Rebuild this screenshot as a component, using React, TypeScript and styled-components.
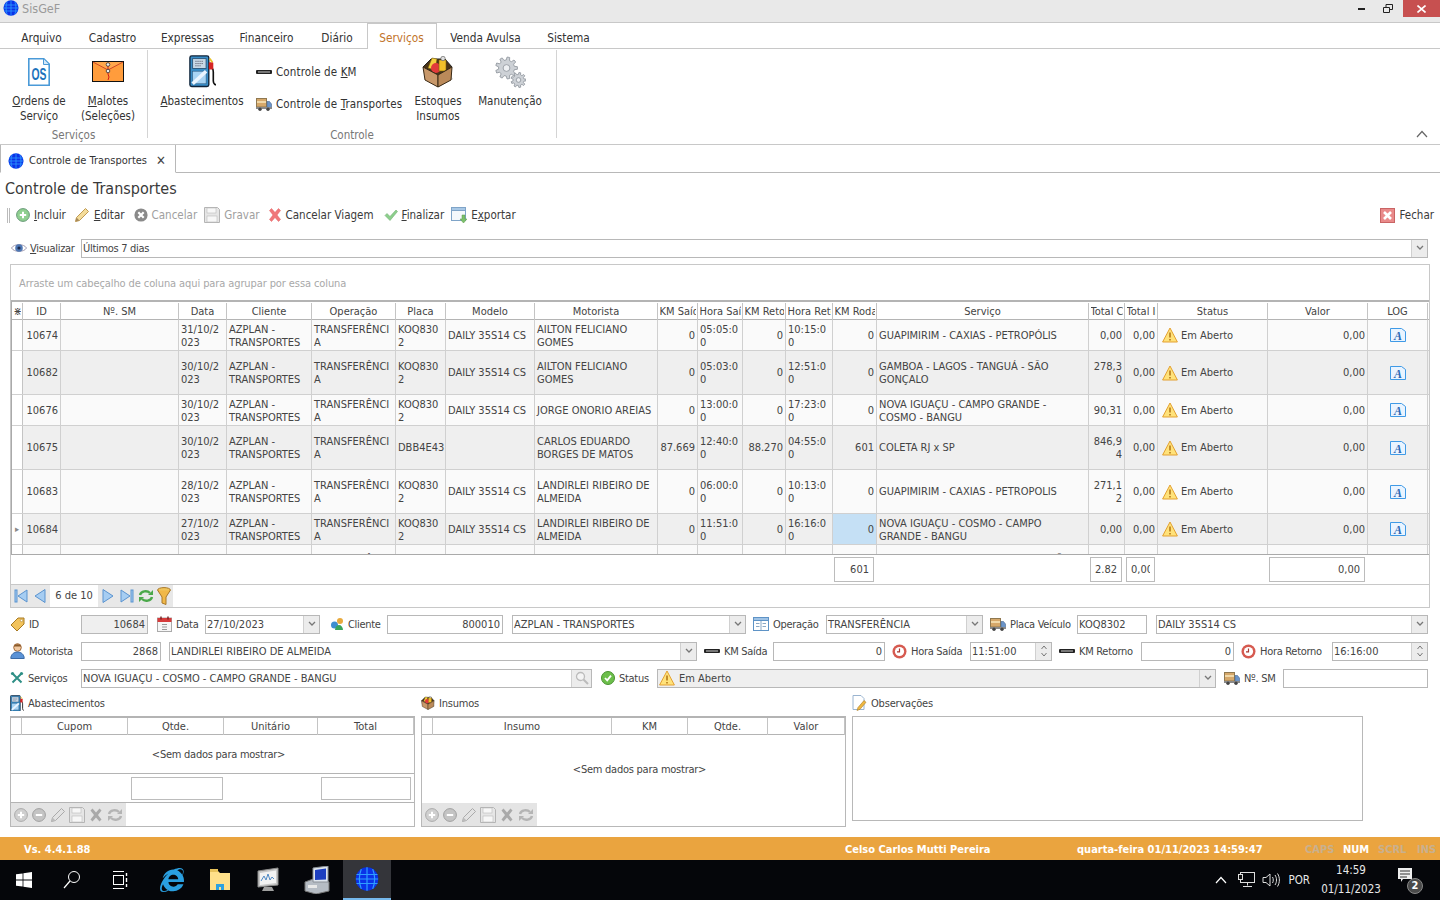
import React from 'react'
import styled, { createGlobalStyle } from 'styled-components'
import { FaInternetExplorer } from 'react-icons/fa'

const GlobalStyle = createGlobalStyle`
  html, body {
    margin: 0;
    padding: 0;
    height: 100%;
    overflow: hidden;
    background: #fff;
  }
  * { box-sizing: border-box; }
  body {
    font-family: 'DejaVu Sans Condensed', 'DejaVu Sans', 'Liberation Sans', sans-serif;
    font-stretch: condensed;
    font-size: 11px;
    line-height: 13px;
    color: #444;
  }
  svg { display: block; flex: none; }
`

/* ---------- icons ---------- */

const gearPath = (cx: number, cy: number, r1: number, r2: number, teeth: number) => {
  const pts: string[] = []
  const step = (Math.PI * 2) / teeth
  for (let i = 0; i < teeth; i++) {
    const a = i * step
    const corners: [number, number][] = [[-0.3, r2], [-0.17, r1], [0.17, r1], [0.3, r2]]
    corners.forEach(([o, r]) => {
      const t = a + o * step
      pts.push(`${(cx + r * Math.cos(t)).toFixed(1)} ${(cy + r * Math.sin(t)).toFixed(1)}`)
    })
  }
  return `M${pts.join('L')}z`
}

const Globe = ({ s = 16 }: { s?: number }) => (
  <svg width={s} height={s} viewBox="0 0 16 16">
    <ellipse cx="8" cy="8" rx="7.5" ry="7.8" fill="#0a32e8" />
    <path d="M1 5h14M.6 8h14.800M1 11h14M8 .2v15.600M4.200 1.400c-1.600 4-1.600 9.200 0 13.200M11.800 1.400c1.600 4 1.600 9.200 0 13.200" fill="none" stroke="#2f9dff" strokeWidth=".8" />
  </svg>
)

const KmBar = ({ s = 16 }: { s?: number }) => (
  <svg width={s} height={s} viewBox="0 0 16 16">
    <rect x="0" y="6" width="16" height="4" rx="1" fill="#222" />
    <rect x="2" y="7" width="12" height="2" fill="#777" />
  </svg>
)

const Truck = ({ s = 16 }: { s?: number }) => (
  <svg width={s} height={s} viewBox="0 0 16 16">
    <rect x=".5" y="2.500" width="10" height="8.500" fill="#d6a86a" stroke="#8f7850" />
    <rect x="1" y="5" width="9" height="2" fill="#f0d8a8" />
    <path d="M11 5.500h2.500l2 2.500v4H11z" fill="#6b94c8" stroke="#47678e" strokeWidth=".6" />
    <rect x="0" y="11" width="16" height="2" fill="#8a8a8a" />
    <circle cx="4" cy="13.300" r="1.700" fill="#444" />
    <circle cx="12" cy="13.300" r="1.700" fill="#444" />
  </svg>
)

const BoxIcon = ({ s = 16 }: { s?: number }) => (
  <svg width={s} height={s} viewBox="0 0 32 32">
    <path d="M17 31l14-8-2-3-12 8z" fill="#999" opacity=".5" />
    <path d="M1 11L9 3h14l7 8-14 8z" fill="#4a3418" stroke="#222" />
    <path d="M6 12L10 2l5 1-2 11z" fill="#f4d040" stroke="#7a6010" strokeWidth=".6" />
    <circle cx="14" cy="12" r="5" fill="#e23a3a" />
    <rect x="17" y="4" width="7" height="11" fill="#f2c02a" stroke="#7a6010" strokeWidth=".6" />
    <circle cx="21" cy="2.500" r="2.200" fill="#ddd" stroke="#555" strokeWidth=".6" />
    <path d="M1 11l15 8v12L3 24z" fill="#c8986a" stroke="#3a2a15" />
    <path d="M30 11l-14 8v12l13-7z" fill="#bb8a5a" stroke="#3a2a15" />
  </svg>
)

const PumpIcon = ({ s = 16 }: { s?: number }) => (
  <svg width={s} height={s * 1.2} viewBox="0 0 30 36">
    <rect x="1" y="1" width="21" height="34" rx="2" fill="#3a8ec8" stroke="#0e2238" strokeWidth="1.500" />
    <rect x="4" y="4" width="15" height="11" fill="#c8d8e6" stroke="#2a5478" />
    <path d="M7 7h9M7 9.500h9M7 12h6" stroke="#556" strokeWidth=".9" strokeDasharray="1.500 .8" />
    <rect x="4" y="18" width="15" height="14" fill="#a8d4f4" stroke="#2a5478" strokeWidth=".6" />
    <path d="M4 32l15-14" stroke="#eaf5ff" strokeWidth="4" />
    <path d="M22 13c4 0 5 2 5 6v10c0 4 3 4 3 4" fill="none" stroke="#111" strokeWidth="1.800" />
    <rect x="22" y="8" width="5" height="8" rx="1" fill="#d52424" />
    <path d="M23 4l3 4" stroke="#e8c22a" strokeWidth="2" />
  </svg>
)

const Gears = () => (
  <svg width="32" height="32" viewBox="0 0 32 32">
    <g fill="#cdd1d6" stroke="#8c9299" strokeWidth=".8">
      <path d={gearPath(12.5, 12, 11, 8, 9)} />
      <circle cx="12.500" cy="12" r="3.400" fill="#eef0f3" />
      <path d={gearPath(24.5, 24, 7.5, 5.5, 9)} />
      <circle cx="24.500" cy="24" r="2.300" fill="#eef0f3" />
    </g>
  </svg>
)

const PlusDisc = ({ off }: { off?: boolean }) => (
  <svg width="14" height="14" viewBox="0 0 14 14">
    <circle cx="7" cy="7" r="6.400" fill={off ? '#cfcfcf' : '#8fcf8f'} stroke={off ? '#aaa' : '#6a9a7a'} />
    <path d="M7 3.800v6.400M3.800 7h6.400" stroke="#fff" strokeWidth="2" />
  </svg>
)

const MinusDisc = () => (
  <svg width="14" height="14" viewBox="0 0 14 14">
    <circle cx="7" cy="7" r="6.400" fill="#c4c4c4" stroke="#a0a0a0" />
    <path d="M3.800 7h6.400" stroke="#fff" strokeWidth="2" />
  </svg>
)

const Pencil = ({ off }: { off?: boolean }) => (
  <svg width="16" height="16" viewBox="0 0 16 16">
    <path d="M1.500 14.500l1-4L11.500 1.500l3 3-9 9z" fill={off ? '#e2e2e2' : '#f4dc9a'} stroke={off ? '#aaa' : '#c09a52'} />
    <path d="M1.500 14.500l1-4 3 3z" fill={off ? '#bbb' : '#a88a5a'} />
  </svg>
)

const CancelDisc = () => (
  <svg width="14" height="14" viewBox="0 0 14 14">
    <circle cx="7" cy="7" r="6.600" fill="#8a8a8a" />
    <path d="M4.300 4.300l5.400 5.400M9.700 4.300l-5.400 5.400" stroke="#fff" strokeWidth="2.200" />
  </svg>
)

const Floppy = () => (
  <svg width="16" height="16" viewBox="0 0 16 16">
    <path d="M.5.5h13l2 2v13H.5z" fill="#e6e6e6" stroke="#b4b4b4" />
    <rect x="3" y="1" width="9" height="5" fill="#f7f7f7" stroke="#bbb" strokeWidth=".6" />
    <rect x="3" y="9" width="10" height="6" fill="#f7f7f7" stroke="#bbb" strokeWidth=".6" />
  </svg>
)

const RedX = () => (
  <svg width="14" height="14" viewBox="0 0 14 14">
    <path d="M1.500 2.500l2-2L7 4.500 10.500.5l2 2L9 7l3.500 4.500-2 2L7 9.500l-3.500 4-2-2L5 7z" fill="#f0787a" stroke="#e35a5c" strokeWidth=".5" />
  </svg>
)

const CloseBox = () => (
  <svg width="15" height="15" viewBox="0 0 15 15">
    <rect x=".5" y=".5" width="14" height="14" fill="#e98a8a" stroke="#c96464" />
    <path d="M4 4l7 7M11 4l-7 7" stroke="#fff" strokeWidth="2.600" />
  </svg>
)

const GrayX = () => (
  <svg width="14" height="14" viewBox="0 0 14 14">
    <path d="M1.500 2.500l2-2L7 4.500 10.500.5l2 2L9 7l3.500 4.500-2 2L7 9.500l-3.500 4-2-2L5 7z" fill="#a9a9a9" />
  </svg>
)

const Check = () => (
  <svg width="14" height="14" viewBox="0 0 14 14">
    <path d="M1 7.500l2-2 3 3L12 2l1.500 1.500L6 12.500z" fill="#8ccf8c" stroke="#73b073" strokeWidth=".6" />
  </svg>
)

const ExportIcon = () => (
  <svg width="16" height="16" viewBox="0 0 16 16">
    <rect x=".5" y=".5" width="14" height="13" fill="#f4f8fc" stroke="#7fa4c8" />
    <rect x=".5" y=".5" width="14" height="3" fill="#a8c8e6" stroke="#7fa4c8" />
    <path d="M11 8h3v4h2l-3.500 4L9 12h2z" fill="#7cc06a" stroke="#5a9a4c" strokeWidth=".5" />
  </svg>
)

const EyeIcon = () => (
  <svg width="16" height="12" viewBox="0 0 16 12">
    <path d="M.5 6C3 1.500 13 1.500 15.500 6 13 10.500 3 10.500 .5 6z" fill="#fff" stroke="#a09ab0" />
    <circle cx="8" cy="6" r="3.800" fill="#4f78b4" />
    <circle cx="8" cy="6" r="1.600" fill="#1b2a4c" />
  </svg>
)

const Warn = () => (
  <svg width="16" height="16" viewBox="0 0 16 16">
    <path d="M8 1l7.400 14H.6z" fill="#ffe27a" stroke="#e3a030" strokeLinejoin="round" />
    <path d="M8 5.500v5M8 12v1.600" stroke="#b5791a" strokeWidth="1.600" />
  </svg>
)

const LogDoc = () => (
  <svg width="16" height="16" viewBox="0 0 16 16">
    <path d="M.5 1.500h11l4 3v10H.5z" fill="#eaf4ff" stroke="#3f9ae6" />
    <text x="8" y="13" textAnchor="middle" fontSize="12" fontWeight="700" fontStyle="italic" fill="#2a67b4" fontFamily="Liberation Serif, serif">A</text>
  </svg>
)

const NavArrow = ({ dir, edge }: { dir: 'l' | 'r'; edge?: boolean }) => (
  <svg width="16" height="16" viewBox="0 0 16 16">
    <g transform={dir === 'l' ? 'translate(16 0) scale(-1 1)' : undefined} fill="#a6cdf2" stroke="#5a93cf">
      <path d={edge ? 'M2 2l9 6-9 6z' : 'M3 1.500L13 8 3 14.500z'} />
      {edge && <rect x="12" y="2" width="2" height="12" />}
    </g>
  </svg>
)

const Recycle = ({ off }: { off?: boolean }) => (
  <svg width="16" height="16" viewBox="0 0 16 16">
    <g fill="none" stroke={off ? '#b4b4b4' : '#4aa84a'} strokeWidth="2.400">
      <path d="M2 7c1-4 7-5 10-2" />
      <path d="M14 9c-1 4-7 5-10 2" />
    </g>
    <path d="M15 2v5h-5zM1 14V9h5z" fill={off ? '#b4b4b4' : '#4aa84a'} />
  </svg>
)

const Funnel = () => (
  <svg width="14" height="18" viewBox="0 0 14 18">
    <ellipse cx="7" cy="3" rx="6.400" ry="2.400" fill="#f0c45a" stroke="#a8782a" />
    <path d="M.8 3.500L5 10v6l4 1.500V10l4.200-6.500" fill="#f0b848" stroke="#a8782a" />
  </svg>
)

const Tag = () => (
  <svg width="15" height="15" viewBox="0 0 15 15">
    <path d="M1 8L8 1h6v6l-7 7z" fill="#f2c35c" stroke="#a87a22" />
    <circle cx="11.500" cy="3.500" r="1.200" fill="#fff" stroke="#a87a22" strokeWidth=".6" />
  </svg>
)

const CalendarIcon = () => (
  <svg width="15" height="16" viewBox="0 0 15 16">
    <rect x=".5" y="2" width="14" height="13.500" fill="#f6f6f6" stroke="#aaa" />
    <rect x=".5" y="2" width="14" height="4" fill="#d63b3b" />
    <path d="M4 .5v3M11 .5v3" stroke="#7a2020" strokeWidth="1.400" />
    <path d="M5 8.500h5M5 11h5M5 13.500h5" stroke="#999" />
  </svg>
)

const ContactIcon = () => (
  <svg width="14" height="14" viewBox="0 0 14 14">
    <circle cx="4.500" cy="8" r="3.500" fill="#3e8ed0" />
    <circle cx="10" cy="4" r="3" fill="#e8a93c" />
    <path d="M5 13c0-3 2-5 4-5s4 2 4 5z" fill="#3aa55c" />
  </svg>
)

const TableIcon = () => (
  <svg width="16" height="14" viewBox="0 0 16 14">
    <rect x=".5" y=".5" width="15" height="13" fill="#fff" stroke="#5e93c6" />
    <rect x=".5" y=".5" width="15" height="3" fill="#9fc3e6" stroke="#5e93c6" />
    <path d="M8 4v9M3 6.500h3.500M3 9.500h3.500M9.500 6.500H13M9.500 9.500H13" stroke="#8aa8c4" />
  </svg>
)

const ClockIcon = () => (
  <svg width="15" height="15" viewBox="0 0 15 15">
    <circle cx="7.500" cy="7.500" r="7" fill="#d65a50" />
    <circle cx="7.500" cy="7.500" r="4.600" fill="#fff" />
    <path d="M7.500 4.500v3.300H5" fill="none" stroke="#a83830" strokeWidth="1.200" />
  </svg>
)

const PersonIcon = () => (
  <svg width="15" height="16" viewBox="0 0 15 16">
    <circle cx="7.500" cy="4.500" r="3.800" fill="#f0c8a0" stroke="#a46a3a" />
    <path d="M3.800 3.500c1-3 6.400-3 7.400 0z" fill="#8a5a2a" />
    <path d="M.8 15.500c0-4 3-6.500 6.700-6.500s6.700 2.500 6.700 6.500z" fill="#5a92d6" stroke="#3a6aa6" />
  </svg>
)

const ToolsIcon = () => (
  <svg width="14" height="14" viewBox="0 0 14 14">
    <path d="M2.500 2.500l9 9M11.500 2.500l-9 9" stroke="#2f8f86" strokeWidth="2" />
    <circle cx="2.500" cy="2.500" r="1.600" fill="#2f8f86" />
    <circle cx="11.500" cy="2.500" r="1.600" fill="#2f8f86" />
  </svg>
)

const GreenOk = () => (
  <svg width="14" height="14" viewBox="0 0 14 14">
    <circle cx="7" cy="7" r="6.500" fill="#6cbe4a" stroke="#4a9232" />
    <path d="M4 7l2.200 2.400L10 4.600" fill="none" stroke="#fff" strokeWidth="1.800" />
  </svg>
)

const Magnifier = () => (
  <svg width="14" height="14" viewBox="0 0 14 14">
    <circle cx="5.500" cy="5.500" r="4" fill="#f4f4f4" stroke="#bbb" strokeWidth="1.300" />
    <path d="M8.500 8.500l4.500 4.500" stroke="#bbb" strokeWidth="2" />
  </svg>
)

const NoteIcon = () => (
  <svg width="15" height="16" viewBox="0 0 15 16">
    <path d="M1 .5h8l3 3v11H1z" fill="#fff" stroke="#9ab4d0" />
    <path d="M5 15.500l1-3 6-7 2 1.800-6 7z" fill="#f0b840" stroke="#a87a22" strokeWidth=".6" />
  </svg>
)

const Chevron = () => (
  <svg width="8" height="6" viewBox="0 0 8 6">
    <path d="M1 1l3 3 3-3" fill="none" stroke="#777" strokeWidth="1.300" />
  </svg>
)

const SpinArrows = () => (
  <svg width="8" height="14" viewBox="0 0 8 14">
    <path d="M1.500 5l2.500-3 2.500 3M1.500 9l2.500 3 2.500-3" fill="none" stroke="#777" />
  </svg>
)

const OsIcon = () => (
  <svg width="22" height="28" viewBox="0 0 22 28">
    <path d="M.8.8h15l5.400 5.400v21H.8z" fill="#fff" stroke="#4a9ad8" strokeWidth="1.600" />
    <path d="M15.500 1v5.500H21" fill="#d4e8f8" stroke="#4a9ad8" />
    <text x="11" y="22" textAnchor="middle" fontSize="17" fontWeight="700" fill="#1c72bc" fontFamily="Liberation Sans, sans-serif" textLength="15" lengthAdjust="spacingAndGlyphs">OS</text>
  </svg>
)

const EnvelopeIcon = () => (
  <svg width="32" height="21" viewBox="0 0 32 21">
    <rect x=".5" y=".5" width="31" height="20" fill="#ff9c3c" stroke="#111" />
    <path d="M1 1l15 8L31 1" fill="#ffa84c" stroke="#c03020" strokeWidth=".8" />
    <path d="M16 4l0 9 1 3-1 3" fill="none" stroke="#d01818" />
    <circle cx="16" cy="3.500" r="1.800" fill="#eee" stroke="#333" strokeWidth=".8" />
    <circle cx="16" cy="10" r="1.800" fill="#eee" stroke="#333" strokeWidth=".8" />
  </svg>
)

const WinLogo = () => (
  <svg width="16" height="16" viewBox="0 0 16 16">
    <path d="M0 2.300L6.600 1.400v6.100H0zM7.400 1.300L16 0v7.500H7.400zM0 8.400h6.600v6.200L0 13.700zM7.400 8.400H16V16l-8.600-1.300z" fill="#fff" />
  </svg>
)

const SearchGlyph = () => (
  <svg width="18" height="20" viewBox="0 0 18 20">
    <circle cx="11" cy="7" r="5.500" fill="none" stroke="#fff" />
    <path d="M7 11l-6 7" stroke="#fff" strokeWidth="1.200" />
  </svg>
)

const TaskView = () => (
  <svg width="18" height="18" viewBox="0 0 18 18">
    <path d="M2 .5h11M2 17.500h11" stroke="#fff" />
    <rect x="2.500" y="4.500" width="10" height="9" fill="none" stroke="#fff" />
    <path d="M15.500 2v3M15.500 7v4M15.500 13v3" stroke="#fff" strokeWidth="1.400" />
  </svg>
)

const FolderIcon = () => (
  <svg width="22" height="24" viewBox="0 0 22 24">
    <path d="M1 3h8l2 2h10v17H1z" fill="#ffe08a" />
    <rect x="1" y="1" width="8" height="3" fill="#e8c25a" />
    <path d="M7 22v-6h8v6h-3v-3h-2v3z" fill="#2ea2e0" />
  </svg>
)

const MonitorApp = () => (
  <svg width="24" height="26" viewBox="0 0 24 26">
    <path d="M2 4l20-3v17L2 20z" fill="#c8c8c8" stroke="#8a8a8a" />
    <path d="M4 6l16-2.400V16L4 18z" fill="#f2f2f2" />
    <path d="M5 14l3-5 2 4 2-6 2 6 2-3 2 2" fill="none" stroke="#3f7fc0" strokeWidth=".9" />
    <path d="M8 20h8l2 4H6z" fill="#a0a0a0" />
  </svg>
)

const ServerApp = () => (
  <svg width="26" height="28" viewBox="0 0 26 28">
    <path d="M1 16l11-4 13 4v9l-13 3-11-3z" fill="#b6bcc4" stroke="#777" />
    <path d="M9 2l15-2v16L9 16z" fill="#dfe6ee" stroke="#8a8f96" />
    <path d="M11 4l11-1.500v11L11 14z" fill="#1d3fc0" />
    <rect x="4" y="19" width="9" height="3" fill="#e8e8e8" />
  </svg>
)

const NetTray = () => (
  <svg width="17" height="16" viewBox="0 0 17 16">
    <rect x="2.500" y=".5" width="14" height="10" fill="none" stroke="#ddd" />
    <rect x=".5" y="2.500" width="4" height="5" fill="#111" stroke="#ddd" />
    <path d="M9.500 10.500v3M5 14.500h9" stroke="#ddd" />
  </svg>
)

const SoundTray = () => (
  <svg width="18" height="16" viewBox="0 0 18 16">
    <path d="M1 5.500h3l4-3.500v12l-4-3.500H1z" fill="none" stroke="#ddd" />
    <path d="M10.500 5c1 1.500 1 4.500 0 6M13 3c2 3 2 7 0 10M15.500 1.500c2.500 4 2.500 9 0 13" fill="none" stroke="#ddd" />
  </svg>
)

const UpCaret = ({ c = '#fff' }: { c?: string }) => (
  <svg width="12" height="8" viewBox="0 0 12 8">
    <path d="M1 7l5-5.500L11 7" fill="none" stroke={c} strokeWidth="1.200" />
  </svg>
)

/* ---------- window chrome ---------- */

const Page = styled.div`
  width: 1440px;
  height: 900px;
  display: flex;
  flex-direction: column;
  overflow: hidden;
`

const TitleBar = styled.div`
  height: 23px;
  flex: none;
  display: flex;
  align-items: flex-start;
  background: #e9e9e9;
  border-bottom: 1px solid #c8c8c8;
  padding-left: 3px;
`

const AppName = styled.span`
  margin: 1px 0 0 3px;
  font-size: 12.5px;
  line-height: 15px;
  color: #9a9a9a;
`

const WinButtons = styled.div`
  margin-left: auto;
  display: flex;
  align-items: flex-start;
`

const WinBtn = styled.div<{ $w: number; $close?: boolean }>`
  width: ${p => p.$w}px;
  height: 17px;
  display: flex;
  align-items: center;
  justify-content: center;
  background: ${p => (p.$close ? '#c75050' : 'transparent')};
`

const MenuBar = styled.div`
  height: 26px;
  flex: none;
  display: flex;
  padding-left: 7.5px;
  border-bottom: 1px solid #c8c8c8;
`

const MenuTab = styled.div<{ $w: number; $on?: boolean }>`
  width: ${p => p.$w}px;
  height: 26px;
  padding-top: 8px;
  text-align: center;
  font-size: 11.75px;
  line-height: 14px;
  white-space: nowrap;
  color: ${p => (p.$on ? '#c2742a' : '#333')};
  ${p => p.$on && 'background:#fff;border:1px solid #c8c8c8;border-bottom:0;padding-top:7px;'}
`

const Ribbon = styled.div`
  height: 96px;
  flex: none;
  display: flex;
  position: relative;
  border-bottom: 1px solid #c8c8c8;
`

const RibbonGroup = styled.div<{ $w: number }>`
  width: ${p => p.$w}px;
  height: 88px;
  margin-top: 1px;
  display: flex;
  flex-direction: column;
  border-right: 1px solid #d4d4d4;
`

const RibbonItems = styled.div`
  flex: 1;
  min-height: 0;
  display: flex;
`

const RibbonCaption = styled.div`
  height: 14px;
  padding-top: 5px;
  text-align: center;
  font-size: 11.5px;
  color: #777;
`

const BigItem = styled.div<{ $w: number }>`
  width: ${p => p.$w}px;
  display: flex;
  flex-direction: column;
  align-items: center;
  font-size: 11.5px;
  line-height: 15px;
  color: #333;
  text-align: center;
  white-space: pre;
`

const BigIcon = styled.div`
  height: 43px;
  margin-bottom: 1px;
  display: flex;
  align-items: center;
  justify-content: center;
`

const SmallStack = styled.div`
  width: 150px;
  padding-top: 14px;
  display: flex;
  flex-direction: column;
  gap: 16px;
`

const SmallItem = styled.div`
  height: 16px;
  display: flex;
  align-items: center;
  gap: 4px;
  font-size: 11.5px;
  letter-spacing: 0.12px;
  color: #333;
  white-space: nowrap;
`

const Collapse = styled.div`
  position: absolute;
  right: 12px;
  bottom: 6px;
`

const U = styled.span`
  text-decoration: underline;
  text-underline-offset: 1px;
`

const DocTabs = styled.div`
  height: 28px;
  flex: none;
  display: flex;
  border-bottom: 1px solid #b8b8b8;
`

const DocTab = styled.div`
  width: 176px;
  height: 28px;
  display: flex;
  align-items: center;
  padding: 4px 0 0 7px;
  gap: 5px;
  border-right: 1px solid #b8b8b8;
  border-bottom: 1px solid #fff;
  border-left: 1px solid #b8b8b8;
  color: #333;
  white-space: nowrap;
`

const TabClose = styled.span`
  margin-left: 4px;
  font-size: 13px;
  font-weight: 700;
  color: #444;
`

const Body = styled.div`
  flex: 1;
  display: flex;
  flex-direction: column;
  min-height: 0;
`

const Heading = styled.h1`
  margin: 0;
  padding: 6px 0 0 5px;
  height: 28px;
  font-size: 16px;
  line-height: 20px;
  font-weight: 400;
  color: #3a3a3a;
`

const ActionBar = styled.div`
  height: 26px;
  margin-top: 1px;
  padding-left: 7px;
  display: flex;
  align-items: center;
`

const Grip = styled.div`
  width: 3px;
  height: 15px;
  margin-right: 6px;
  border-left: 1px solid #bbb;
  border-right: 1px solid #bbb;
`

const Action = styled.div<{ $off?: boolean; $push?: boolean; $mr?: number }>`
  display: flex;
  align-items: center;
  gap: 4px;
  margin-right: ${p => p.$mr ?? 7}px;
  font-size: 11.5px;
  color: ${p => (p.$off ? '#a0a0a0' : '#3a3a3a')};
  white-space: nowrap;
  ${p => p.$push && 'margin-left:auto;margin-right:6px;'}
`

const ViewRow = styled.div`
  height: 20px;
  margin: 10px 11px 0 11px;
  display: flex;
  align-items: center;
  letter-spacing: -0.3px;
`

const ViewLabel = styled.div`
  width: 70px;
  display: flex;
  align-items: center;
  gap: 3px;
`

/* ---------- grid ---------- */

const COLS = '11px 38px 118px 48px 85px 84px 50px 89px 123px 40px 45px 43px 47px 44px 212px 36px 33px 110px 100px 60px'

const Panel = styled.div`
  margin: 6px 10px 0 10px;
  height: 344px;
  flex: none;
  border: 1px solid #c8c8c8;
  display: flex;
  flex-direction: column;
`

const DragHint = styled.div`
  height: 35px;
  padding: 12px 0 0 8px;
  color: #a8a8a8;
  letter-spacing: -0.1px;
`

const GridFrame = styled.div`
  height: 255px;
  border-top: 2px solid #b4b4b4;
  border-bottom: 1px solid #aaa;
  border-left: 1px solid #aaa;
  overflow: hidden;
`

const HeadRow = styled.div`
  display: grid;
  grid-template-columns: ${COLS};
  height: 18px;
  padding-top: 1px;
  border-bottom: 1px solid #b4b4b4;
`

const HeadCell = styled.div`
  border-right: 1px solid #c4c4c4;
  padding: 0 1.5px;
  color: #444;
`

const HeadText = styled.span`
  display: block;
  text-align: center;
  line-height: 17px;
  white-space: nowrap;
  overflow: hidden;
`

const DataRow = styled.div<{ $h: number; $even?: boolean }>`
  display: grid;
  grid-template-columns: ${COLS};
  height: ${p => p.$h}px;
  background: ${p => (p.$even ? '#efefef' : '#fafafa')};
  border-bottom: 1px solid #d0d0d0;
`

const Cell = styled.div<{ $r?: boolean; $sel?: boolean; $top?: boolean; $low?: boolean }>`
  display: flex;
  align-items: ${p => (p.$top ? 'flex-start' : 'center')};
  justify-content: ${p => (p.$r ? 'flex-end' : 'flex-start')};
  text-align: ${p => (p.$r ? 'right' : 'left')};
  padding: ${p => (p.$top ? '8px' : p.$low ? '1px' : '0')} 2px 0 2px;
  border-right: 1px solid #d0d0d0;
  white-space: pre;
  overflow: hidden;
  color: #444;
  background: ${p => (p.$sel ? '#c5e0f5' : 'transparent')};
`

const Indicator = styled.div`
  display: flex;
  align-items: center;
  justify-content: center;
  background: #fff;
  border-right: 1px solid #c4c4c4;
  color: #888;
  font-size: 9px;
`

const StatusCell = styled(Cell)`
  gap: 3px;
  padding-left: 4px;
`

const LogCell = styled(Cell)`
  justify-content: center;
`

const SummaryRow = styled.div`
  height: 30px;
  display: grid;
  grid-template-columns: ${COLS};
  align-items: center;
  border-bottom: 1px solid #c8c8c8;
`

const SummaryBox = styled.div<{ $col: number; $left?: boolean }>`
  grid-column: ${p => p.$col};
  grid-row: 1;
  height: 25px;
  margin: 0 2px;
  border: 1px solid #bcbcbc;
  line-height: 23px;
  text-align: ${p => (p.$left ? 'left' : 'right')};
  padding: 0 4px;
  min-width: 0;
`

const SummaryText = styled.span`
  display: block;
  overflow: hidden;
  white-space: nowrap;
`

const Navigator = styled.div`
  height: 22px;
  display: flex;
`

const NavGroup = styled.div`
  display: flex;
  align-items: center;
  gap: 3px;
  padding: 0 2px;
  background: #e8e8e8;
`

const NavText = styled.div`
  width: 48px;
  text-align: center;
  line-height: 22px;
`

/* ---------- form ---------- */

const FormArea = styled.div`
  margin-top: 7px;
  display: flex;
  flex-direction: column;
  gap: 9px;
`

const FormRow = styled.div`
  height: 18px;
  padding-left: 10px;
  display: flex;
  align-items: center;
`

const Caption = styled.div<{ $w: number; $ml?: number }>`
  width: ${p => p.$w}px;
  margin-left: ${p => p.$ml ?? 0}px;
  display: flex;
  align-items: center;
  gap: 4px;
  white-space: nowrap;
  flex: none;
  letter-spacing: -0.3px;
`

const Field = styled.div<{ $w: number; $ml?: number; $r?: boolean; $gray?: boolean }>`
  width: ${p => p.$w}px;
  margin-left: ${p => p.$ml ?? 0}px;
  height: 19px;
  flex: none;
  display: flex;
  align-items: center;
  justify-content: ${p => (p.$r ? 'flex-end' : 'space-between')};
  border: 1px solid #b8b8b8;
  background: ${p => (p.$gray ? '#efefef' : '#fff')};
  padding-left: 1px;
  padding-right: ${p => (p.$r ? '2px' : '0')};
  color: #444;
  white-space: nowrap;
  overflow: hidden;
`

const FieldBtn = styled.div<{ $w?: number }>`
  width: ${p => p.$w ?? 16}px;
  height: 17px;
  flex: none;
  display: flex;
  align-items: center;
  justify-content: center;
  background: #ececec;
  border-left: 1px solid #d0d0d0;
`

const FieldText = styled.span`
  display: flex;
  align-items: center;
  gap: 4px;
`

const ThreeCols = styled.div`
  padding-left: 10px;
  margin-top: 7px;
  display: flex;
`

const Column = styled.div<{ $w: number }>`
  width: ${p => p.$w}px;
  flex: none;
  margin-right: 6px;
`

const ColTitle = styled.div`
  height: 22px;
  display: flex;
  align-items: center;
  gap: 4px;
  padding-bottom: 4px;
  letter-spacing: -0.2px;
`

const MiniGrid = styled.div`
  height: 111px;
  display: flex;
  flex-direction: column;
  border: 1px solid #b8b8b8;
  border-top: 2px solid #b4b4b4;
`

const MiniHead = styled.div<{ $cols: string }>`
  display: grid;
  grid-template-columns: ${p => p.$cols};
  height: 17px;
  flex: none;
  border-bottom: 1px solid #b4b4b4;
`

const Empty = styled.div`
  flex: 1;
  display: flex;
  align-items: center;
  justify-content: center;
  padding-left: 12px;
  letter-spacing: -0.25px;
  color: #444;
`

const MiniFoot = styled.div`
  height: 30px;
  flex: none;
  padding: 3px 3px 2px 0;
  display: flex;
  justify-content: flex-end;
  border-top: 1px solid #b4b4b4;
  border-bottom: 1px solid #b4b4b4;
`

const FootBox = styled.div<{ $w: number; $mr?: number }>`
  width: ${p => p.$w}px;
  margin-right: ${p => p.$mr ?? 0}px;
  border: 1px solid #bcbcbc;
`

const MiniNav = styled.div`
  height: 23px;
  flex: none;
  width: 115px;
  display: flex;
  align-items: center;
  justify-content: space-between;
  padding: 0 3px;
  background: #e4e4e4;
`

const NotesBox = styled.div`
  width: 511px;
  height: 105px;
  border: 1px solid #b8b8b8;
`

/* ---------- status and task bar ---------- */

const StatusBar = styled.div`
  height: 23px;
  flex: none;
  display: flex;
  align-items: center;
  padding-top: 1px;
  background: #eaa43f;
  color: #fff;
  font-weight: 700;
  white-space: nowrap;
`

const StatusText = styled.span<{ $w: number; $ml?: number; $dim?: boolean }>`
  width: ${p => p.$w}px;
  margin-left: ${p => p.$ml ?? 0}px;
  flex: none;
  color: ${p => (p.$dim ? '#c9b08e' : '#fff')};
`

const TaskBar = styled.div`
  height: 40px;
  flex: none;
  display: flex;
  align-items: center;
  background: #05060a;
`

const TaskBtn = styled.div<{ $on?: boolean; $ml?: number }>`
  width: 48px;
  height: 40px;
  flex: none;
  margin-left: ${p => p.$ml ?? 0}px;
  display: flex;
  align-items: center;
  justify-content: center;
  background: ${p => (p.$on ? '#34353a' : 'transparent')};
  border-bottom: ${p => (p.$on ? '2px solid #76b9ed' : '0')};
`

const Tray = styled.div`
  margin-left: auto;
  display: flex;
  align-items: center;
  color: #e8e8e8;
  font-size: 11.5px;
`

const TrayItem = styled.div<{ $ml?: number }>`
  margin-left: ${p => p.$ml ?? 0}px;
`

const Clock = styled.div`
  width: 70px;
  margin-left: 6px;
  text-align: center;
  line-height: 19px;
`

const Notify = styled.div`
  width: 32px;
  margin: 0 17px 0 5px;
  height: 30px;
  position: relative;
`

const NotifyIcon = styled.svg`
  position: absolute;
  left: 7px;
  top: 3px;
`

const NotifyBadge = styled.span`
  position: absolute;
  left: 16px;
  top: 13px;
  width: 16px;
  height: 16px;
  border-radius: 50%;
  background: #4a4a4a;
  border: 1px solid #888;
  color: #fff;
  font-size: 11px;
  font-weight: 700;
  line-height: 14px;
  text-align: center;
`

/* ---------- data ---------- */

const heads = ['', 'ID', 'Nº. SM', 'Data', 'Cliente', 'Operação', 'Placa', 'Modelo', 'Motorista', 'KM Saída', 'Hora Saída', 'KM Retorno', 'Hora Retorno', 'KM Rodado', 'Serviço', 'Total Combustível', 'Total Insumos', 'Status', 'Valor', 'LOG']

type Viagem = {
  id: string; h: number; data: string; placa: string; modelo: string; motorista: string
  kmS: string; horaS: string; kmR: string; horaR: string; rodado: string; servico: string; total: string
}

const viagens: Viagem[] = [
  { id: '10674', h: 31, data: '31/10/2\n023', placa: 'KOQ830\n2', modelo: 'DAILY 35S14 CS', motorista: 'AILTON FELICIANO\nGOMES', kmS: '0', horaS: '05:05:0\n0', kmR: '0', horaR: '10:15:0\n0', rodado: '0', servico: 'GUAPIMIRIM - CAXIAS - PETROPÓLIS', total: '0,00' },
  { id: '10682', h: 44, data: '30/10/2\n023', placa: 'KOQ830\n2', modelo: 'DAILY 35S14 CS', motorista: 'AILTON FELICIANO\nGOMES', kmS: '0', horaS: '05:03:0\n0', kmR: '0', horaR: '12:51:0\n0', rodado: '0', servico: 'GAMBOA - LAGOS - TANGUÁ - SÃO\nGONÇALO', total: '278,3\n0' },
  { id: '10676', h: 31, data: '30/10/2\n023', placa: 'KOQ830\n2', modelo: 'DAILY 35S14 CS', motorista: 'JORGE ONORIO AREIAS', kmS: '0', horaS: '13:00:0\n0', kmR: '0', horaR: '17:23:0\n0', rodado: '0', servico: 'NOVA IGUAÇU - CAMPO GRANDE -\nCOSMO - BANGU', total: '90,31' },
  { id: '10675', h: 44, data: '30/10/2\n023', placa: 'DBB4E43', modelo: '', motorista: 'CARLOS EDUARDO\nBORGES DE MATOS', kmS: '87.669', horaS: '12:40:0\n0', kmR: '88.270', horaR: '04:55:0\n0', rodado: '601', servico: 'COLETA RJ x SP', total: '846,9\n4' },
  { id: '10683', h: 44, data: '28/10/2\n023', placa: 'KOQ830\n2', modelo: 'DAILY 35S14 CS', motorista: 'LANDIRLEI RIBEIRO DE\nALMEIDA', kmS: '0', horaS: '06:00:0\n0', kmR: '0', horaR: '10:13:0\n0', rodado: '0', servico: 'GUAPIMIRIM - CAXIAS - PETROPOLIS', total: '271,1\n2' },
  { id: '10684', h: 31, data: '27/10/2\n023', placa: 'KOQ830\n2', modelo: 'DAILY 35S14 CS', motorista: 'LANDIRLEI RIBEIRO DE\nALMEIDA', kmS: '0', horaS: '11:51:0\n0', kmR: '0', horaR: '16:16:0\n0', rodado: '0', servico: 'NOVA IGUAÇU - COSMO - CAMPO\nGRANDE - BANGU', total: '0,00' },
]

const CrudIcons = () => (
  <MiniNav>
    <PlusDisc off />
    <MinusDisc />
    <Pencil off />
    <Floppy />
    <GrayX />
    <Recycle off />
  </MiniNav>
)

export default function App() {
  return (
    <Page>
      <GlobalStyle />
      <TitleBar>
        <Globe />
        <AppName>SisGeF</AppName>
        <WinButtons>
          <WinBtn $w={28}>
            <svg width="7" height="2" viewBox="0 0 7 2"><rect width="7" height="2" fill="#222" /></svg>
          </WinBtn>
          <WinBtn $w={26}>
            <svg width="10" height="9" viewBox="0 0 10 9"><path d="M.5 3.500h6v5h-6zM3 3V.5h6.500v5H7" fill="none" stroke="#222" /></svg>
          </WinBtn>
          <WinBtn $w={2} />
          <WinBtn $w={37} $close>
            <svg width="9" height="8" viewBox="0 0 9 8"><path d="M.5.5l8 7M8.500.5l-8 7" stroke="#fff" strokeWidth="1.600" /></svg>
          </WinBtn>
        </WinButtons>
      </TitleBar>

      <MenuBar>
        <MenuTab $w={68}>Arquivo</MenuTab>
        <MenuTab $w={74}>Cadastro</MenuTab>
        <MenuTab $w={76}>Expressas</MenuTab>
        <MenuTab $w={82}>Financeiro</MenuTab>
        <MenuTab $w={59}>Diário</MenuTab>
        <MenuTab $w={70} $on>Serviços</MenuTab>
        <MenuTab $w={98}>Venda Avulsa</MenuTab>
        <MenuTab $w={68}>Sistema</MenuTab>
      </MenuBar>

      <Ribbon>
        <RibbonGroup $w={148}>
          <RibbonItems>
            <BigItem $w={78}>
              <BigIcon><OsIcon /></BigIcon>
              <span><U>O</U>rdens de{'\n'}Serviço</span>
            </BigItem>
            <BigItem $w={60}>
              <BigIcon><EnvelopeIcon /></BigIcon>
              <span><U>M</U>alotes{'\n'}(Seleções)</span>
            </BigItem>
          </RibbonItems>
          <RibbonCaption>Serviços</RibbonCaption>
        </RibbonGroup>
        <RibbonGroup $w={409}>
          <RibbonItems>
            <BigItem $w={108}>
              <BigIcon><PumpIcon s={27} /></BigIcon>
              <span><U>A</U>bastecimentos</span>
            </BigItem>
            <SmallStack>
              <SmallItem><KmBar /><span>Controle de <U>K</U>M</span></SmallItem>
              <SmallItem><Truck /><span>Controle de <U>T</U>ransportes</span></SmallItem>
            </SmallStack>
            <BigItem $w={64}>
              <BigIcon><BoxIcon s={32} /></BigIcon>
              <span>Estoques{'\n'}Insumos</span>
            </BigItem>
            <BigItem $w={80}>
              <BigIcon><Gears /></BigIcon>
              <span>Manutenção</span>
            </BigItem>
          </RibbonItems>
          <RibbonCaption>Controle</RibbonCaption>
        </RibbonGroup>
        <Collapse><UpCaret c="#666" /></Collapse>
      </Ribbon>

      <DocTabs>
        <DocTab>
          <Globe />
          Controle de Transportes
          <TabClose>✕</TabClose>
        </DocTab>
      </DocTabs>

      <Body>
        <Heading>Controle de Transportes</Heading>
        <ActionBar>
          <Grip />
          <Action $mr={8}><PlusDisc /><span><U>I</U>ncluir</span></Action>
          <Action $mr={9}><Pencil /><span><U>E</U>ditar</span></Action>
          <Action $off><CancelDisc /><span>Cancelar</span></Action>
          <Action $off $mr={8}><Floppy /><span>Gravar</span></Action>
          <Action $mr={10}><RedX /><span>Cancelar Viagem</span></Action>
          <Action><Check /><span><U>F</U>inalizar</span></Action>
          <Action><ExportIcon /><span>E<U>x</U>portar</span></Action>
          <Action $push><CloseBox /><span>Fechar</span></Action>
        </ActionBar>

        <ViewRow>
          <ViewLabel><EyeIcon /><span><U>V</U>isualizar</span></ViewLabel>
          <Field $w={1347}>
            <span>Últimos 7 dias</span>
            <FieldBtn><Chevron /></FieldBtn>
          </Field>
        </ViewRow>

        <Panel>
          <DragHint>Arraste um cabeçalho de coluna aqui para agrupar por essa coluna</DragHint>
          <GridFrame>
            <HeadRow>
              {heads.map((h, i) => <HeadCell key={i}><HeadText>{h || '⋇'}</HeadText></HeadCell>)}
            </HeadRow>
            {viagens.map((v, i) => {
              const low = v.h === 31
              return (
                <DataRow key={v.id} $h={v.h} $even={i % 2 === 1}>
                  <Indicator>{i === 5 ? '▸' : ''}</Indicator>
                  <Cell $r>{v.id}</Cell>
                  <Cell />
                  <Cell $low={low}>{v.data}</Cell>
                  <Cell $low={low}>{'AZPLAN -\nTRANSPORTES'}</Cell>
                  <Cell $low={low}>{'TRANSFERÊNCI\nA'}</Cell>
                  <Cell $low={low}>{v.placa}</Cell>
                  <Cell>{v.modelo}</Cell>
                  <Cell $low={low}>{v.motorista}</Cell>
                  <Cell $r>{v.kmS}</Cell>
                  <Cell $low={low}>{v.horaS}</Cell>
                  <Cell $r>{v.kmR}</Cell>
                  <Cell $low={low}>{v.horaR}</Cell>
                  <Cell $r $sel={i === 5}>{v.rodado}</Cell>
                  <Cell $low={low}>{v.servico}</Cell>
                  <Cell $r>{v.total}</Cell>
                  <Cell $r>0,00</Cell>
                  <StatusCell><Warn />Em Aberto</StatusCell>
                  <Cell $r>0,00</Cell>
                  <LogCell><LogDoc /></LogCell>
                </DataRow>
              )
            })}
            <DataRow $h={11}>
              <Indicator />
              <Cell /><Cell /><Cell /><Cell />
              <Cell $top>TRANSFERÊNCI</Cell>
              <Cell /><Cell /><Cell /><Cell /><Cell /><Cell /><Cell /><Cell />
              <Cell $top>NOVA IGUAÇU - CAMPO GRANDE - SÃO</Cell>
              <Cell /><Cell /><Cell /><Cell /><Cell />
            </DataRow>
          </GridFrame>
          <SummaryRow>
            <SummaryBox $col={14}><SummaryText>601</SummaryText></SummaryBox>
            <SummaryBox $col={16} $left><SummaryText>2.823,67</SummaryText></SummaryBox>
            <SummaryBox $col={17} $left><SummaryText>0,00,00</SummaryText></SummaryBox>
            <SummaryBox $col={19}><SummaryText>0,00</SummaryText></SummaryBox>
          </SummaryRow>
          <Navigator>
            <NavGroup><NavArrow dir="l" edge /><NavArrow dir="l" /></NavGroup>
            <NavText>6 de 10</NavText>
            <NavGroup>
              <NavArrow dir="r" />
              <NavArrow dir="r" edge />
              <Recycle />
              <Funnel />
            </NavGroup>
          </Navigator>
        </Panel>

        <FormArea>
          <FormRow>
            <Caption $w={71}><Tag />ID</Caption>
            <Field $w={67} $r $gray>10684</Field>
            <Caption $w={48} $ml={9}><CalendarIcon />Data</Caption>
            <Field $w={115}><span>27/10/2023</span><FieldBtn><Chevron /></FieldBtn></Field>
            <Caption $w={57} $ml={10}><ContactIcon />Cliente</Caption>
            <Field $w={116} $r>800010</Field>
            <Field $w={234} $ml={9}><span>AZPLAN - TRANSPORTES</span><FieldBtn><Chevron /></FieldBtn></Field>
            <Caption $w={73} $ml={7}><TableIcon />Operação</Caption>
            <Field $w={157}><span>TRANSFERÊNCIA</span><FieldBtn><Chevron /></FieldBtn></Field>
            <Caption $w={87} $ml={7}><Truck />Placa Veículo</Caption>
            <Field $w={70}>KOQ8302</Field>
            <Field $w={272} $ml={9}><span>DAILY 35S14 CS</span><FieldBtn><Chevron /></FieldBtn></Field>
          </FormRow>
          <FormRow>
            <Caption $w={71}><PersonIcon />Motorista</Caption>
            <Field $w={80} $r>2868</Field>
            <Field $w={528} $ml={8}><span>LANDIRLEI RIBEIRO DE ALMEIDA</span><FieldBtn><Chevron /></FieldBtn></Field>
            <Caption $w={69} $ml={7}><KmBar />KM Saída</Caption>
            <Field $w={112} $r>0</Field>
            <Caption $w={78} $ml={7}><ClockIcon />Hora Saída</Caption>
            <Field $w={82}><span>11:51:00</span><FieldBtn><SpinArrows /></FieldBtn></Field>
            <Caption $w={82} $ml={7}><KmBar />KM Retorno</Caption>
            <Field $w={93} $r>0</Field>
            <Caption $w={91} $ml={7}><ClockIcon />Hora Retorno</Caption>
            <Field $w={96}><span>16:16:00</span><FieldBtn><SpinArrows /></FieldBtn></Field>
          </FormRow>
          <FormRow>
            <Caption $w={71}><ToolsIcon />Serviços</Caption>
            <Field $w={511}><span>NOVA IGUAÇU - COSMO - CAMPO GRANDE - BANGU</span><FieldBtn $w={20}><Magnifier /></FieldBtn></Field>
            <Caption $w={56} $ml={9}><GreenOk />Status</Caption>
            <Field $w={559} $gray><FieldText><Warn />Em Aberto</FieldText><FieldBtn><Chevron /></FieldBtn></Field>
            <Caption $w={59} $ml={8}><Truck />Nº. SM</Caption>
            <Field $w={145} />
          </FormRow>
        </FormArea>

        <ThreeCols>
          <Column $w={405}>
            <ColTitle><PumpIcon s={14} />Abastecimentos</ColTitle>
            <MiniGrid>
              <MiniHead $cols="11px 106px 96px 94px 1fr">
                <HeadCell /><HeadCell><HeadText>Cupom</HeadText></HeadCell><HeadCell><HeadText>Qtde.</HeadText></HeadCell><HeadCell><HeadText>Unitário</HeadText></HeadCell><HeadCell><HeadText>Total</HeadText></HeadCell>
              </MiniHead>
              <Empty>&lt;Sem dados para mostrar&gt;</Empty>
              <MiniFoot>
                <FootBox $w={92} $mr={98} />
                <FootBox $w={90} />
              </MiniFoot>
              <CrudIcons />
            </MiniGrid>
          </Column>
          <Column $w={425}>
            <ColTitle><BoxIcon s={14} />Insumos</ColTitle>
            <MiniGrid>
              <MiniHead $cols="11px 179px 76px 80px 1fr">
                <HeadCell /><HeadCell><HeadText>Insumo</HeadText></HeadCell><HeadCell><HeadText>KM</HeadText></HeadCell><HeadCell><HeadText>Qtde.</HeadText></HeadCell><HeadCell><HeadText>Valor</HeadText></HeadCell>
              </MiniHead>
              <Empty>&lt;Sem dados para mostrar&gt;</Empty>
              <CrudIcons />
            </MiniGrid>
          </Column>
          <Column $w={511}>
            <ColTitle><NoteIcon />Observações</ColTitle>
            <NotesBox />
          </Column>
        </ThreeCols>
      </Body>

      <StatusBar>
        <StatusText $w={200} $ml={24}>Vs. 4.4.1.88</StatusText>
        <StatusText $w={232} $ml={621}>Celso Carlos Mutti Pereira</StatusText>
        <StatusText $w={228}>quarta-feira 01/11/2023 14:59:47</StatusText>
        <StatusText $w={38} $dim>CAPS</StatusText>
        <StatusText $w={35}>NUM</StatusText>
        <StatusText $w={39} $dim>SCRL</StatusText>
        <StatusText $w={20} $dim>INS</StatusText>
      </StatusBar>

      <TaskBar>
        <TaskBtn><WinLogo /></TaskBtn>
        <TaskBtn><SearchGlyph /></TaskBtn>
        <TaskBtn><TaskView /></TaskBtn>
        <TaskBtn $ml={4}><FaInternetExplorer size={24} color="#2a9fe0" /></TaskBtn>
        <TaskBtn><FolderIcon /></TaskBtn>
        <TaskBtn><MonitorApp /></TaskBtn>
        <TaskBtn $ml={1}><ServerApp /></TaskBtn>
        <TaskBtn $ml={2} $on><Globe s={24} /></TaskBtn>
        <Tray>
          <UpCaret />
          <TrayItem $ml={11}><NetTray /></TrayItem>
          <TrayItem $ml={7}><SoundTray /></TrayItem>
          <TrayItem $ml={8}>POR</TrayItem>
          <Clock>14:59<br />01/11/2023</Clock>
          <Notify>
            <NotifyIcon width="14" height="14" viewBox="0 0 14 14">
              <path d="M0 0h14v11H5l-2 3v-3H0z" fill="#eee" />
              <path d="M2 3h10M2 6h10M2 9h7" stroke="#333" />
            </NotifyIcon>
            <NotifyBadge>2</NotifyBadge>
          </Notify>
        </Tray>
      </TaskBar>
    </Page>
  )
}
